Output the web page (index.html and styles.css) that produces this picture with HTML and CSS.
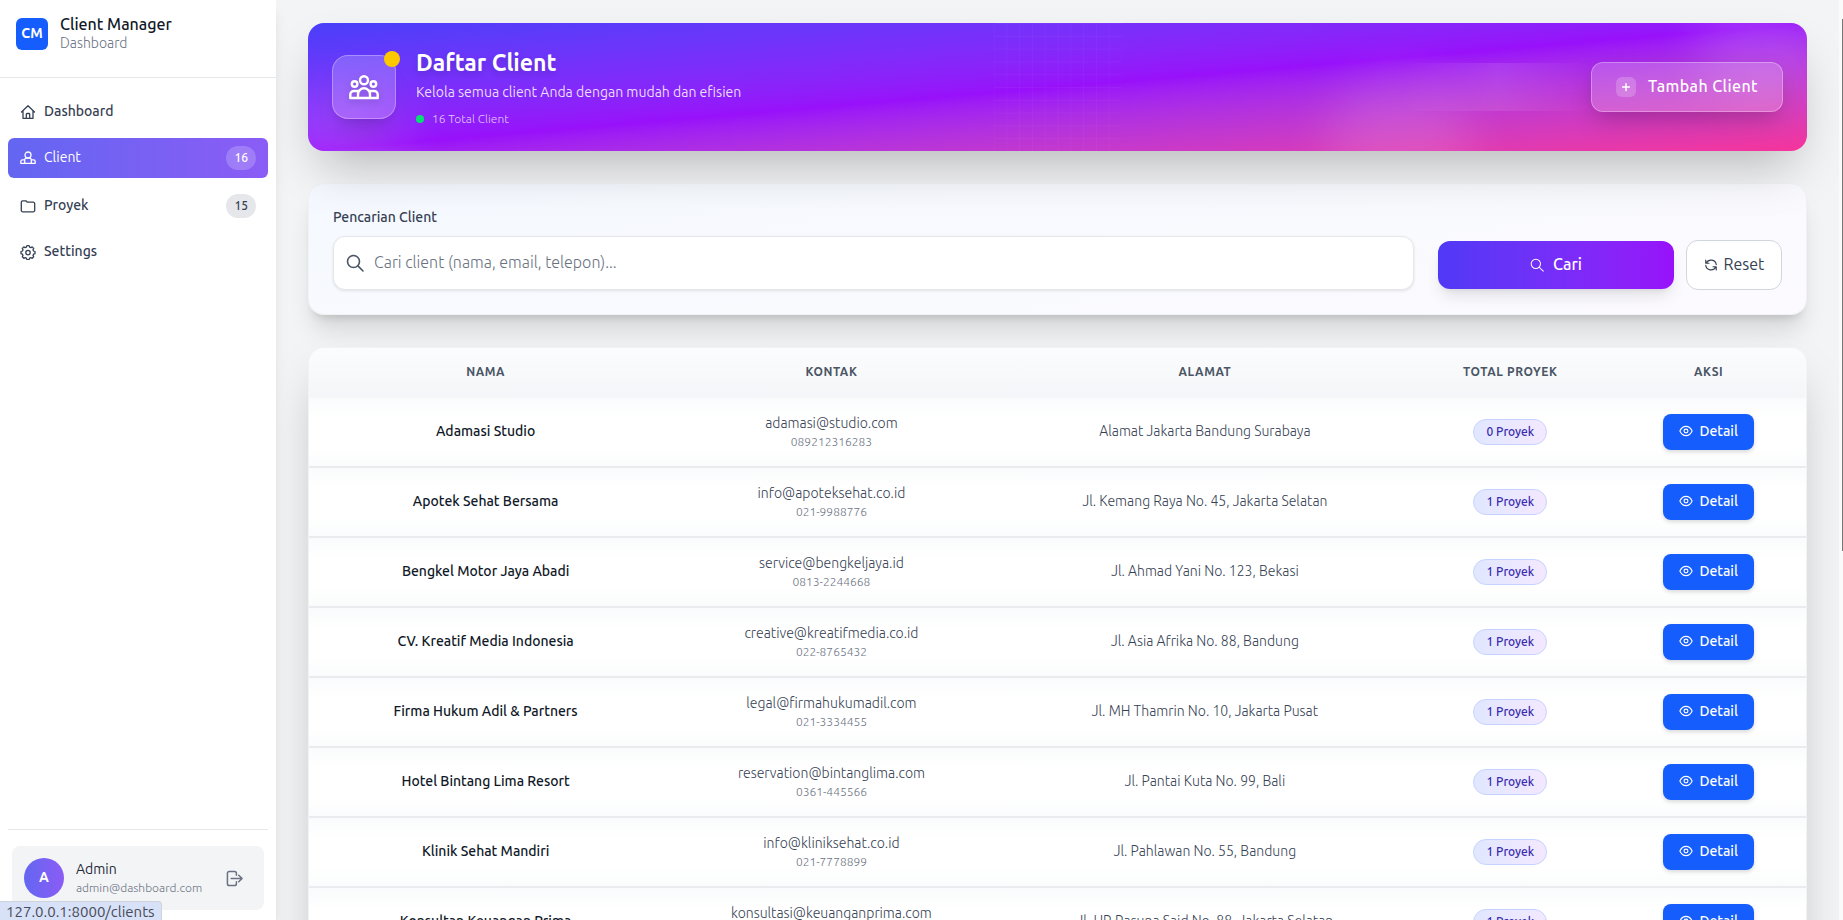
FILE: index.html
```html
<!DOCTYPE html>
<html lang="id">
<head>
<meta charset="utf-8">
<meta name="viewport" content="width=device-width, initial-scale=1">
<title>Daftar Client - Client Manager</title>
<link rel="stylesheet" href="styles.css">
</head>
<body>
<svg class="sprite" aria-hidden="true">
  <symbol id="i-home" viewBox="0 0 16 16"><path d="M3 7.2V14.3H13V7.2M1.5 8 8 1.7 14.5 8M6.3 14.3V10.2a.7.7 0 0 1 .7-.7h2a.7.7 0 0 1 .7.7v4.1"/></symbol>
  <symbol id="i-client" viewBox="0 0 16 16"><circle cx="8" cy="5" r="3"/><path d="M4.7 13.3V9.9A1.8 1.8 0 0 1 6.5 8.1h3a1.8 1.8 0 0 1 1.8 1.8v3.4M.8 13.3v-1.9a1.5 1.5 0 0 1 1.5-1.5h2.4M15.2 13.3v-1.9a1.5 1.5 0 0 0-1.5-1.5h-2.4M.8 13.3H15.2"/></symbol>
  <symbol id="i-folder" viewBox="0 0 16 16"><path d="M1.3 12.4V4.2a1.4 1.4 0 0 1 1.4-1.4h3.1l1.6 1.4h5.9a1.4 1.4 0 0 1 1.4 1.4v6.8a1.4 1.4 0 0 1-1.4 1.4H2.7a1.4 1.4 0 0 1-1.4-1.4z"/></symbol>
  <symbol id="i-gear" viewBox="0 0 16 16"><path d="M6.900 1.600h2.200l.5 1.500 1.200.5 1.400-.7 1.500 1.500-.7 1.400.5 1.200 1.500.5v2.200l-1.500.5-.5 1.200.7 1.400-1.500 1.500-1.400-.7-1.200.5-.5 1.500H6.900l-.5-1.500-1.200-.5-1.400.7-1.500-1.500.7-1.400-.5-1.200-1.500-.5V7.500l1.500-.5.5-1.200-.7-1.400 1.500-1.500 1.400.7 1.200-.5z"/><circle cx="8" cy="8.600" r="2.200"/></symbol>
  <symbol id="i-logout" viewBox="0 0 18 18"><path d="M11 5.600V3.400A1.900 1.900 0 0 0 9.100 1.500H3.400A1.900 1.900 0 0 0 1.500 3.400V14.600A1.900 1.900 0 0 0 3.400 16.500H9.100A1.900 1.900 0 0 0 11 14.600V12.400M5.500 9H16.700M13.500 5.500 17 9 13.500 12.500"/></symbol>
  <symbol id="i-group" viewBox="0 0 32 32"><circle cx="16" cy="9.300" r="4"/><circle cx="6.600" cy="13" r="2.800"/><circle cx="25.400" cy="13" r="2.800"/><path d="M10 27V23.300A6 6 0 0 1 22 23.300V27M2.300 27V23.500A3.500 3.500 0 0 1 5.800 20H10.800M29.700 27V23.500A3.500 3.500 0 0 0 26.200 20H21.200M2.300 27H29.700"/></symbol>
  <symbol id="i-search" viewBox="0 0 18 18"><circle cx="7.500" cy="7.500" r="6"/><path d="M11.900 11.900 17 17"/></symbol>
  <symbol id="i-reset" viewBox="0 0 16 16"><path d="M2.700 5.700A6 6 0 0 1 14 7.500M2 2.300V6H5.700M13.300 10.300A6 6 0 0 1 2 8.500M14 13.700V10H10.300"/></symbol>
  <symbol id="i-eye" viewBox="0 0 16 16"><path d="M1 8C2.600 4.500 5 2.700 8 2.700S13.400 4.500 15 8c-1.600 3.500-4 5.300-7 5.300S2.600 11.500 1 8z"/><circle cx="8" cy="8" r="2.200"/></symbol>
  <symbol id="i-plus" viewBox="0 0 16 16"><path d="M8 3.500v9M3.500 8h9"/></symbol>
</svg>

<div class="app">
  <aside class="sidebar">
    <div class="brand">
      <span class="brand-logo">CM</span>
      <div>
        <div class="brand-name">Client Manager</div>
        <div class="brand-sub">Dashboard</div>
      </div>
    </div>
    <nav class="nav">
      <a class="nav-item" href="#"><svg class="icon"><use href="#i-home"/></svg><span class="nav-label">Dashboard</span></a>
      <a class="nav-item active" href="#"><svg class="icon"><use href="#i-client"/></svg><span class="nav-label">Client</span><span class="count">16</span></a>
      <a class="nav-item" href="#"><svg class="icon"><use href="#i-folder"/></svg><span class="nav-label">Proyek</span><span class="count">15</span></a>
      <a class="nav-item" href="#"><svg class="icon"><use href="#i-gear"/></svg><span class="nav-label">Settings</span></a>
    </nav>
    <div class="account">
      <div class="account-card">
        <span class="avatar">A</span>
        <div class="account-text">
          <div class="account-name">Admin</div>
          <div class="account-mail">admin@dashboard.com</div>
        </div>
        <button class="logout" type="button" aria-label="Logout"><svg class="icon"><use href="#i-logout"/></svg></button>
      </div>
    </div>
  </aside>

  <main class="main">
    <header class="banner">
      <div class="banner-art" aria-hidden="true">
        <span class="glow glow-right"></span>
        <span class="glow glow-left"></span>
        <span class="glow glow-mid"></span>
        <svg class="grid-lines" viewBox="0 0 100 100"><defs><pattern id="grid" width="10" height="10" patternUnits="userSpaceOnUse"><path d="M10 0H0V10" fill="none" stroke="#fff" stroke-width="1"/></pattern></defs><rect width="100" height="100" fill="url(#grid)"/></svg>
      </div>
      <div class="banner-icon"><svg class="icon"><use href="#i-group"/></svg><span class="banner-dot"></span></div>
      <div class="banner-text">
        <h1>Daftar Client</h1>
        <p class="banner-sub">Kelola semua client Anda dengan mudah dan efisien</p>
        <p class="banner-total"><span class="dot"></span>16 Total Client</p>
      </div>
      <button class="add" type="button"><span class="add-icon"><svg class="icon"><use href="#i-plus"/></svg></span><span class="btn-label">Tambah Client</span></button>
    </header>

    <form class="search">
      <div class="search-field">
        <label for="q">Pencarian Client</label>
        <div class="input-wrap">
          <svg class="icon"><use href="#i-search"/></svg>
          <input id="q" type="text" placeholder="Cari client (nama, email, telepon)...">
        </div>
      </div>
      <div class="search-actions">
        <button class="btn-search" type="button"><svg class="icon"><use href="#i-search"/></svg><span class="btn-label">Cari</span></button>
        <button class="btn-reset" type="reset"><svg class="icon"><use href="#i-reset"/></svg><span class="btn-label">Reset</span></button>
      </div>
    </form>

    <section class="table-card">
      <table>
        <colgroup><col class="c-name"><col class="c-contact"><col class="c-address"><col class="c-total"><col class="c-action"></colgroup>
        <thead><tr><th>Nama</th><th>Kontak</th><th>Alamat</th><th>Total Proyek</th><th>Aksi</th></tr></thead>
        <tbody>
          <tr><td class="name">Adamasi Studio</td><td><div class="mail">adamasi@studio.com</div><div class="phone">089212316283</div></td><td class="address">Alamat Jakarta Bandung Surabaya</td><td><span class="pill">0 Proyek</span></td><td><a class="detail" href="#"><svg class="icon"><use href="#i-eye"/></svg>Detail</a></td></tr>
          <tr><td class="name">Apotek Sehat Bersama</td><td><div class="mail">info@apoteksehat.co.id</div><div class="phone">021-9988776</div></td><td class="address">Jl. Kemang Raya No. 45, Jakarta Selatan</td><td><span class="pill">1 Proyek</span></td><td><a class="detail" href="#"><svg class="icon"><use href="#i-eye"/></svg>Detail</a></td></tr>
          <tr><td class="name">Bengkel Motor Jaya Abadi</td><td><div class="mail">service@bengkeljaya.id</div><div class="phone">0813-2244668</div></td><td class="address">Jl. Ahmad Yani No. 123, Bekasi</td><td><span class="pill">1 Proyek</span></td><td><a class="detail" href="#"><svg class="icon"><use href="#i-eye"/></svg>Detail</a></td></tr>
          <tr><td class="name">CV. Kreatif Media Indonesia</td><td><div class="mail">creative@kreatifmedia.co.id</div><div class="phone">022-8765432</div></td><td class="address">Jl. Asia Afrika No. 88, Bandung</td><td><span class="pill">1 Proyek</span></td><td><a class="detail" href="#"><svg class="icon"><use href="#i-eye"/></svg>Detail</a></td></tr>
          <tr><td class="name">Firma Hukum Adil &amp; Partners</td><td><div class="mail">legal@firmahukumadil.com</div><div class="phone">021-3334455</div></td><td class="address">Jl. MH Thamrin No. 10, Jakarta Pusat</td><td><span class="pill">1 Proyek</span></td><td><a class="detail" href="#"><svg class="icon"><use href="#i-eye"/></svg>Detail</a></td></tr>
          <tr><td class="name">Hotel Bintang Lima Resort</td><td><div class="mail">reservation@bintanglima.com</div><div class="phone">0361-445566</div></td><td class="address">Jl. Pantai Kuta No. 99, Bali</td><td><span class="pill">1 Proyek</span></td><td><a class="detail" href="#"><svg class="icon"><use href="#i-eye"/></svg>Detail</a></td></tr>
          <tr><td class="name">Klinik Sehat Mandiri</td><td><div class="mail">info@kliniksehat.co.id</div><div class="phone">021-7778899</div></td><td class="address">Jl. Pahlawan No. 55, Bandung</td><td><span class="pill">1 Proyek</span></td><td><a class="detail" href="#"><svg class="icon"><use href="#i-eye"/></svg>Detail</a></td></tr>
          <tr><td class="name">Konsultan Keuangan Prima</td><td><div class="mail">konsultasi@keuanganprima.com</div><div class="phone">021-5556677</div></td><td class="address">Jl. HR Rasuna Said No. 88, Jakarta Selatan</td><td><span class="pill">1 Proyek</span></td><td><a class="detail" href="#"><svg class="icon"><use href="#i-eye"/></svg>Detail</a></td></tr>
        </tbody>
      </table>
    </section>
  </main>
  <div class="scroll-track" aria-hidden="true"><span class="scroll-thumb"></span></div>
</div>
<div class="status">127.0.0.1:8000/clients</div>
</body>
</html>
```
FILE: styles.css
```css
* { box-sizing: border-box; margin: 0; }

body {
  background: #f3f4f6;
  color: #364153;
  font-family: Ubuntu, "Noto Sans", "Open Sans", sans-serif;
  font-size: 14px;
  line-height: 20px;
  overflow: hidden;
}

button, input { font: inherit; color: inherit; }
button { cursor: pointer; border: 0; background: none; }
a { color: inherit; text-decoration: none; }

.sprite { position: absolute; width: 0; height: 0; }
.icon {
  width: 14px;
  height: 14px;
  flex: none;
  fill: none;
  stroke: currentColor;
  stroke-width: 1.3;
  stroke-linecap: round;
  stroke-linejoin: round;
}

.app { display: flex; height: 100vh; }

/* Sidebar */
.sidebar {
  display: flex;
  flex-direction: column;
  flex: none;
  width: 276px;
  background: #fff;
  box-shadow: 0 10px 15px -3px rgb(0 0 0 / .1), 0 4px 6px -4px rgb(0 0 0 / .1);
}
.brand {
  display: flex;
  align-items: flex-start;
  gap: 12px;
  height: 78px;
  padding: 15px 16px;
  border-bottom: 1px solid #e5e7eb;
}
.brand-logo {
  display: grid;
  place-items: center;
  width: 32px;
  height: 32px;
  margin-top: 3px;
  padding-bottom: 2px;
  border-radius: 6px;
  background: #155dfc;
  color: #fff;
  font-weight: 700;
}
.brand-name { font-size: 16px; font-weight: 500; line-height: 18px; color: #101828; }
.brand-sub { font-weight: 300; color: #6a7282; }

.nav { display: flex; flex-direction: column; gap: 8px; padding: 16px 8px; }
.nav-item {
  display: flex;
  align-items: center;
  gap: 8px;
  padding: 8px 12px;
  border-radius: 6px;
  font-weight: 500;
}
.nav-item .icon { width: 16px; height: 16px; }
.nav-label { line-height: 18px; padding-bottom: 2px; }
.nav-item.active {
  background: linear-gradient(90deg, #6366f1, #8b5cf6);
  color: #fff;
  font-weight: 400;
}
.count {
  margin-left: auto;
  padding: 2px 8px;
  border-radius: 12px;
  background: #e5e7eb;
  font-size: 12px;
  font-weight: 500;
}
.active .count { background: rgb(255 255 255 / .2); }

.account { margin: auto 8px 0; padding: 16px 4px 10px; border-top: 1px solid #e5e7eb; }
.account-card {
  display: flex;
  align-items: center;
  gap: 12px;
  padding: 12px;
  border-radius: 8px;
  background: #f3f4f6;
}
.avatar {
  display: grid;
  place-items: center;
  width: 40px;
  height: 40px;
  padding-bottom: 2px;
  border-radius: 50%;
  background: linear-gradient(90deg, #6366f1, #8b5cf6);
  color: #fff;
  font-weight: 600;
}
.account-name { color: #1e2939; line-height: 22px; }
.account-mail { font-size: 12px; line-height: 16px; padding-bottom: 2px; color: #6a7282; font-weight: 300; }
.logout { margin-left: auto; padding: 8px 9px; color: #6a7282; line-height: 0; }
.logout .icon { width: 17px; height: 17px; stroke-width: 1.6; }

/* Main column */
.main {
  display: flex;
  flex-direction: column;
  gap: 32px;
  flex: 1;
  min-width: 0;
  padding: 23px 32px 0;
  overflow: hidden;
}
.main > * { flex: none; }

.banner {
  position: relative;
  display: flex;
  align-items: center;
  gap: 20px;
  padding: 20px 24px;
  min-height: 128px;
  border-radius: 16px;
  background: linear-gradient(to bottom right in oklab, #483ffa, #9810fa, #f6339a);
  box-shadow: 0 25px 50px -12px rgb(0 0 0 / .25);
  color: #fff;
}
.banner > :not(.banner-art) { position: relative; }
.banner-art { position: absolute; inset: 0; border-radius: 16px; overflow: hidden; }
.glow { position: absolute; border-radius: 50%; background: rgb(255 255 255 / .12); filter: blur(24px); }
.glow-right { top: -32px; right: -16px; width: 128px; height: 112px; }
.glow-left { bottom: -32px; left: -32px; width: 128px; height: 96px; }
.glow-mid { top: 40%; left: 68%; width: 144px; height: 128px; }
.grid-lines { position: absolute; inset: 0; width: 100%; height: 100%; opacity: .05; }

.banner-icon {
  display: grid;
  place-items: center;
  width: 64px;
  height: 64px;
  border: 1px solid rgb(255 255 255 / .3);
  border-radius: 16px;
  background: rgb(255 255 255 / .2);
  box-shadow: 0 20px 25px -5px rgb(0 0 0 / .1), 0 8px 10px -6px rgb(0 0 0 / .1);
}
.banner-icon .icon { width: 32px; height: 32px; stroke-width: 2.4; filter: drop-shadow(0 3px 3px rgb(0 0 0 / .15)); }
.banner-dot { position: absolute; top: -5px; right: -5px; width: 16px; height: 16px; border-radius: 50%; background: #fcc800; }
h1 { font-size: 23px; line-height: 32px; font-weight: 600; text-shadow: 0 3px 6px rgb(0 0 0 / .15); }
.banner-text { flex: 1; }
.banner-sub { margin-top: 3px; color: rgb(255 255 255 / .85); }
.banner-total { display: flex; align-items: center; gap: 8px; margin-top: 9px; font-size: 12px; line-height: 16px; font-weight: 300; color: rgb(255 255 255 / .75); }
.dot { width: 8px; height: 8px; border-radius: 50%; background: #05df72; }

.add {
  display: flex;
  align-items: center;
  gap: 12px;
  height: 50px;
  padding: 0 24px;
  border: 1px solid rgb(255 255 255 / .3);
  border-radius: 12px;
  background: rgb(255 255 255 / .2);
  box-shadow: 0 10px 25px -5px rgb(0 0 0 / .25);
  font-size: 16px;
  font-weight: 500;
  letter-spacing: .025em;
}
.add::before {
  content: "";
  position: absolute;
  top: 0;
  bottom: 0;
  right: 100%;
  width: 100%;
  background: linear-gradient(90deg, transparent, rgb(255 255 255 / .1), transparent);
}
.add-icon { display: grid; place-items: center; width: 20px; height: 20px; border-radius: 6px; background: rgb(255 255 255 / .2); }
.add-icon .icon { width: 12px; height: 12px; stroke-width: 2; }
.btn-label { padding-bottom: 2px; }

/* Search card */
.search {
  display: grid;
  grid-template-columns: repeat(4, 1fr);
  gap: 24px;
  padding: 24px;
  border: 1px solid #f1f2f6;
  border-radius: 16px;
  background: linear-gradient(170deg, #f5f9ff, #f9fafe 55%, #fcfaff);
  box-shadow: 0 20px 25px -5px rgb(0 0 0 / .12), 0 8px 10px -6px rgb(0 0 0 / .15);
}
.search-field { grid-column: span 3; }
.search-field label { display: block; margin-bottom: 10px; line-height: 18px; font-weight: 500; }
.input-wrap {
  display: flex;
  align-items: center;
  gap: 10px;
  height: 54px;
  padding: 0 12px;
  border: 1px solid #e5e7eb;
  border-radius: 12px;
  background: #fff;
  box-shadow: 0 1px 3px rgb(0 0 0 / .1);
}
.input-wrap .icon { width: 18px; height: 18px; color: #4a5565; stroke-width: 1.6; }
.input-wrap input { flex: 1; min-width: 0; border: 0; outline: 0; padding: 0 0 2px; background: none; font-size: 16px; font-weight: 300; }
.input-wrap input::placeholder { color: #6a7282; opacity: 1; }
.search-actions { display: flex; align-items: center; align-self: end; gap: 12px; height: 50px; }
.search-actions button { display: flex; align-items: center; justify-content: center; border-radius: 12px; font-size: 16px; }
.btn-search {
  flex: 1;
  gap: 9px;
  height: 48px;
  background: linear-gradient(to right in oklab, #4f39f6, #9810fa);
  box-shadow: 0 10px 15px -3px rgb(0 0 0 / .1), 0 4px 6px -4px rgb(0 0 0 / .1);
}
.search-actions .btn-search { color: #fff; font-weight: 500; }
.btn-reset { gap: 6px; width: 96px; height: 50px; padding: 0; }
.search-actions .btn-reset { border: 1px solid #d1d5dc; background: #fff; }

/* Client table */
.table-card {
  border: 1px solid #f1f2f4;
  border-radius: 16px;
  background: #fff;
  box-shadow: 0 25px 50px -12px rgb(0 0 0 / .25);
  overflow: hidden;
}
table { width: 100%; table-layout: fixed; border-collapse: separate; border-spacing: 0; text-align: center; }
.c-name { width: 23.6%; }
.c-contact { width: 22.6%; }
.c-address { width: 27.3%; }
.c-total { width: 13.5%; }
.c-action { width: 13%; }
thead { background: linear-gradient(#fbfcfd, #f5f6f9); }
th { height: 50px; padding: 0 0 2px; font-size: 12px; font-weight: 600; letter-spacing: .05em; text-transform: uppercase; color: #4a5565; }
td { height: 70px; padding: 0 0 1px; border-bottom: 2px solid #eaebef; vertical-align: middle; font-weight: 300; }
tbody tr { background: linear-gradient(#fafbfc, #fff 30%, #fff 70%, #fafbfc); }
.name, .address { padding-bottom: 3px; }
.name { color: #101828; font-weight: 500; }
.mail { line-height: 20px; }
.phone { font-size: 12px; line-height: 18px; color: #6a7282; }
.pill {
  display: inline-block;
  padding: 4px 12px;
  border: 1px solid #c6d2ff;
  border-radius: 13px;
  background: linear-gradient(90deg, #e0e7ff, #f3e8ff);
  color: #372aac;
  font-size: 12px;
  font-weight: 500;
  line-height: 16px;
  vertical-align: middle;
}
.detail {
  display: inline-flex;
  align-items: center;
  gap: 6px;
  padding: 7px 16px 9px;
  border-radius: 8px;
  background: #155dfc;
  box-shadow: 0 2px 4px rgb(0 0 0 / .15);
  color: #fff;
  font-weight: 500;
  vertical-align: middle;
}

/* Window chrome */
.scroll-track { display: flex; justify-content: flex-end; flex: none; width: 4px; padding-top: 19px; background: #fafafa; }
.scroll-thumb { width: 1px; height: 59%; background: #777; }
.status {
  position: fixed;
  left: 0;
  bottom: 0;
  padding: 1px 6px 0 6px;
  border: 1px solid #cfd3dd;
  border-width: 1px 1px 0 0;
  border-radius: 0 4px 0 0;
  background: #d7e1f8;
  color: #474b57;
  font-size: 15px;
  line-height: 17px;
}
```
